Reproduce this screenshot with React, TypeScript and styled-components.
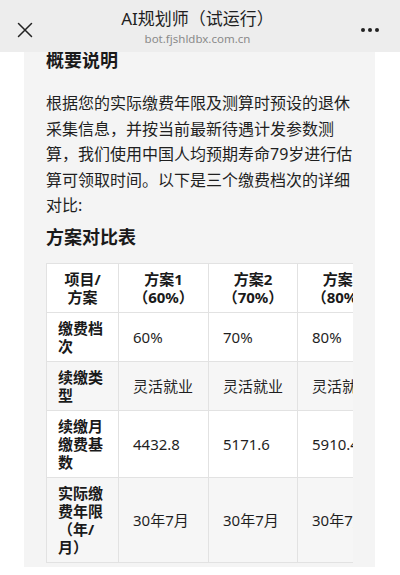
import React from 'react';
import styled, { createGlobalStyle } from 'styled-components';

const GlobalStyle = createGlobalStyle`
  html, body {
    margin: 0;
    padding: 0;
    background: #ffffff;
  }
  body {
    font-family: 'Noto Sans', 'Noto Sans CJK SC', sans-serif;
    color: #1f1f1f;
  }
  * {
    box-sizing: border-box;
  }
`;

type Row = {
  label: string;
  values: string[];
};

const plans = [
  { name: '方案1', rate: '（60%）' },
  { name: '方案2', rate: '（70%）' },
  { name: '方案3', rate: '（80%）' },
];

const rows: Row[] = [
  { label: '缴费档次', values: ['60%', '70%', '80%'] },
  { label: '续缴类型', values: ['灵活就业', '灵活就业', '灵活就业'] },
  { label: '续缴月缴费基数', values: ['4432.8', '5171.6', '5910.4'] },
  { label: '实际缴费年限（年/月）', values: ['30年7月', '30年7月', '30年7月'] },
];

const CloseIcon = () => (
  <svg width="16" height="16" viewBox="0 0 16 16">
    <path d="M1.5 1.5 L14.5 14.5 M14.5 1.5 L1.5 14.5" stroke="#222" strokeWidth="1.5" strokeLinecap="round" />
  </svg>
);

const MoreIcon = () => (
  <svg width="20" height="6" viewBox="0 0 20 6">
    <circle cx="3" cy="3" r="2" fill="#222" />
    <circle cx="10" cy="3" r="2" fill="#222" />
    <circle cx="17" cy="3" r="2" fill="#222" />
  </svg>
);

const App = () => {
  return (
    <Page>
      <GlobalStyle />
      <TopBar>
        <IconButton>
          <CloseIcon />
        </IconButton>
        <TitleBox>
          <Title>AI规划师（试运行）</Title>
          <SubTitle>bot.fjshldbx.com.cn</SubTitle>
        </TitleBox>
        <IconButton>
          <MoreIcon />
        </IconButton>
      </TopBar>

      <Card>
        <SectionTitle>概要说明</SectionTitle>
        <Paragraph>
          根据您的实际缴费年限及测算时预设的退休采集信息，并按当前最新待遇计发参数测算，我们使用中国人均预期寿命79岁进行估算可领取时间。以下是三个缴费档次的详细对比:
        </Paragraph>
        <TableTitle>方案对比表</TableTitle>

        <TableScroll>
          <Table>
            <colgroup>
              <col style={{ width: 72 }} />
              <col style={{ width: 90 }} />
              <col style={{ width: 89 }} />
              <col style={{ width: 89 }} />
            </colgroup>
            <thead>
              <tr>
                <HeadCell>项目/方案</HeadCell>
                {plans.map((p) => (
                  <HeadCell key={p.name}>
                    {p.name}
                    <br />
                    {p.rate}
                  </HeadCell>
                ))}
              </tr>
            </thead>
            <tbody>
              {rows.map((r, i) => (
                <BodyRow key={r.label} $striped={i % 2 === 1}>
                  <LabelCell>{r.label}</LabelCell>
                  {r.values.map((v, j) => (
                    <ValueCell key={j}>{v}</ValueCell>
                  ))}
                </BodyRow>
              ))}
            </tbody>
          </Table>
        </TableScroll>
      </Card>
    </Page>
  );
};

export default App;

const Page = styled.div`
  width: 400px;
  height: 575px;
  overflow: hidden;
  background: #ffffff;
  display: flex;
  flex-direction: column;
`;

const TopBar = styled.div`
  height: 52px;
  flex-shrink: 0;
  background: #ededed;
  display: flex;
  align-items: center;
  justify-content: space-between;
  padding: 0 20px 0 15px;
`;

const IconButton = styled.div`
  width: 20px;
  display: flex;
  align-items: center;
  justify-content: center;
  padding-top: 8px;
`;

const TitleBox = styled.div`
  display: flex;
  flex-direction: column;
  align-items: center;
  padding-top: 2px;
`;

const Title = styled.div`
  font-size: 17px;
  line-height: 22px;
  color: #1f1f1f;
  font-family: 'Noto Sans', 'Noto Sans CJK SC', sans-serif;
`;

const SubTitle = styled.div`
  font-size: 11.5px;
  line-height: 16px;
  color: #8a8a8a;
  margin-top: 1px;
`;

const Card = styled.div`
  width: 351px;
  height: 515px;
  margin-left: 24px;
  background: #f4f4f4;
  padding: 0 22px;
  overflow: hidden;
`;

const SectionTitle = styled.div`
  font-size: 18px;
  font-weight: bold;
  line-height: 16px;
  color: #1a1a1a;
`;

const Paragraph = styled.p`
  margin: 23px 0 0;
  font-size: 16px;
  line-height: 25.5px;
  color: #1f1f1f;
`;

const TableTitle = styled.div`
  margin-top: 5px;
  font-size: 18px;
  font-weight: bold;
  line-height: 26px;
  color: #1a1a1a;
`;

const TableScroll = styled.div`
  margin-top: 13px;
  width: 307px;
  overflow-x: auto;
  scrollbar-width: none;
  &::-webkit-scrollbar {
    display: none;
  }
`;

const Table = styled.table`
  border-collapse: collapse;
  table-layout: fixed;
  width: 340px;
  font-size: 15px;
  line-height: 18px;
`;

const HeadCell = styled.th`
  background: #ffffff;
  border: 1px solid #e2e2e2;
  padding: 6px 10px;
  font-weight: bold;
  text-align: center;
  color: #1a1a1a;
  white-space: nowrap;
  &:first-child {
    white-space: normal;
  }
`;

const BodyRow = styled.tr<{ $striped: boolean }>`
  background: ${({ $striped }) => ($striped ? '#f6f6f6' : '#ffffff')};
`;

const LabelCell = styled.td`
  border: 1px solid #e2e2e2;
  padding: 6px 11px;
  font-weight: bold;
  color: #1a1a1a;
  word-break: break-all;
`;

const ValueCell = styled.td`
  border: 1px solid #e2e2e2;
  padding: 6px 14px;
  color: #1f1f1f;
  white-space: nowrap;
`;
